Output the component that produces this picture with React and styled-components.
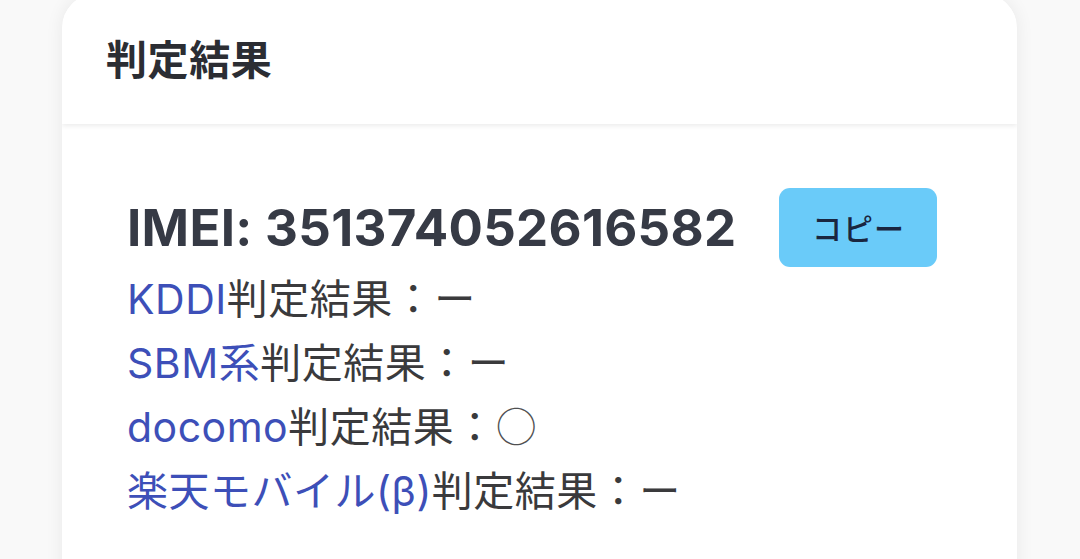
import React from "react";
import styled, { createGlobalStyle } from "styled-components";

const Global = createGlobalStyle`
  html, body { margin: 0; padding: 0; background: #f9f9f9; overflow: hidden; }
  body { font-family: "Inter", "Noto Sans CJK JP", sans-serif; }
`;

const Page = styled.div`
  width: 1080px;
  height: 559px;
  padding: 0 63px 0 62px;
  box-sizing: border-box;
  background: #f9f9f9;
  overflow: hidden;
`;

const Card = styled.section`
  margin-top: -6px;
  background: #ffffff;
  border-radius: 34px 34px 0 0;
  box-shadow: 0 0 18px rgba(0, 0, 0, 0.07);
  height: 620px;
  overflow: hidden;
`;

const Header = styled.header`
  height: 130px;
  display: flex;
  align-items: center;
  padding: 0 44px;
  box-sizing: border-box;
  background: #fff;
  box-shadow: 0 2px 5px rgba(0, 0, 0, 0.08);
  position: relative;
`;

const Title = styled.h2`
  margin: 0;
  margin-top: -4px;
  font-family: "Noto Sans CJK JP", sans-serif;
  font-weight: 700;
  font-size: 41px;
  color: #2b2d33;
  letter-spacing: 0.6px;
`;

const Body = styled.div`
  padding: 63px 65px 0;
`;

const ImeiRow = styled.div`
  display: flex;
  align-items: center;
  gap: 43px;
  height: 80px;
`;

const Imei = styled.div`
  font-family: "Inter", "Noto Sans CJK JP", sans-serif;
  font-weight: 700;
  font-size: 51px;
  color: #363a45;
  letter-spacing: 0.3px;
`;

const CopyButton = styled.button`
  width: 158px;
  height: 79px;
  border: none;
  border-radius: 11px;
  background: #6acbf9;
  color: #1a2640;
  font-family: "Noto Sans CJK JP", sans-serif;
  font-size: 30px;
  font-weight: 500;
  letter-spacing: 1px;
  display: flex;
  align-items: center;
  justify-content: center;
  padding: 0;
`;

const Results = styled.div`
  margin-top: -3px;
  display: flex;
  flex-direction: column;
`;

const Line = styled.div`
  height: 64px;
  line-height: 64px;
  font-family: "Inter", "Noto Sans CJK JP", sans-serif;
  font-size: 41px;
  letter-spacing: 0.5px;
  color: #3a3a3c;
  white-space: nowrap;
`;

const Carrier = styled.span`
  color: #3d4fb8;
`;

const Value = styled.span`
  font-family: "Noto Sans CJK JP", sans-serif;
  font-weight: ${(p) => (p.$circle ? 300 : 400)};
  color: ${(p) => (p.$circle ? "#505052" : "#3a3a3c")};
`;

const results = [
  { carrier: "KDDI", value: "ー" },
  { carrier: "SBM系", value: "ー" },
  { carrier: "docomo", value: "○" },
  { carrier: "楽天モバイル(β)", value: "ー" },
];

export default function App() {
  return (
    <>
      <Global />
      <Page>
        <Card>
          <Header>
            <Title>判定結果</Title>
          </Header>
          <Body>
            <ImeiRow>
              <Imei>IMEI: 351374052616582</Imei>
              <CopyButton>コピー</CopyButton>
            </ImeiRow>
            <Results>
              {results.map((r) => (
                <Line key={r.carrier}>
                  <Carrier>{r.carrier}</Carrier>判定結果：
                  <Value $circle={r.value === "○"}>{r.value}</Value>
                </Line>
              ))}
            </Results>
          </Body>
        </Card>
      </Page>
    </>
  );
}
